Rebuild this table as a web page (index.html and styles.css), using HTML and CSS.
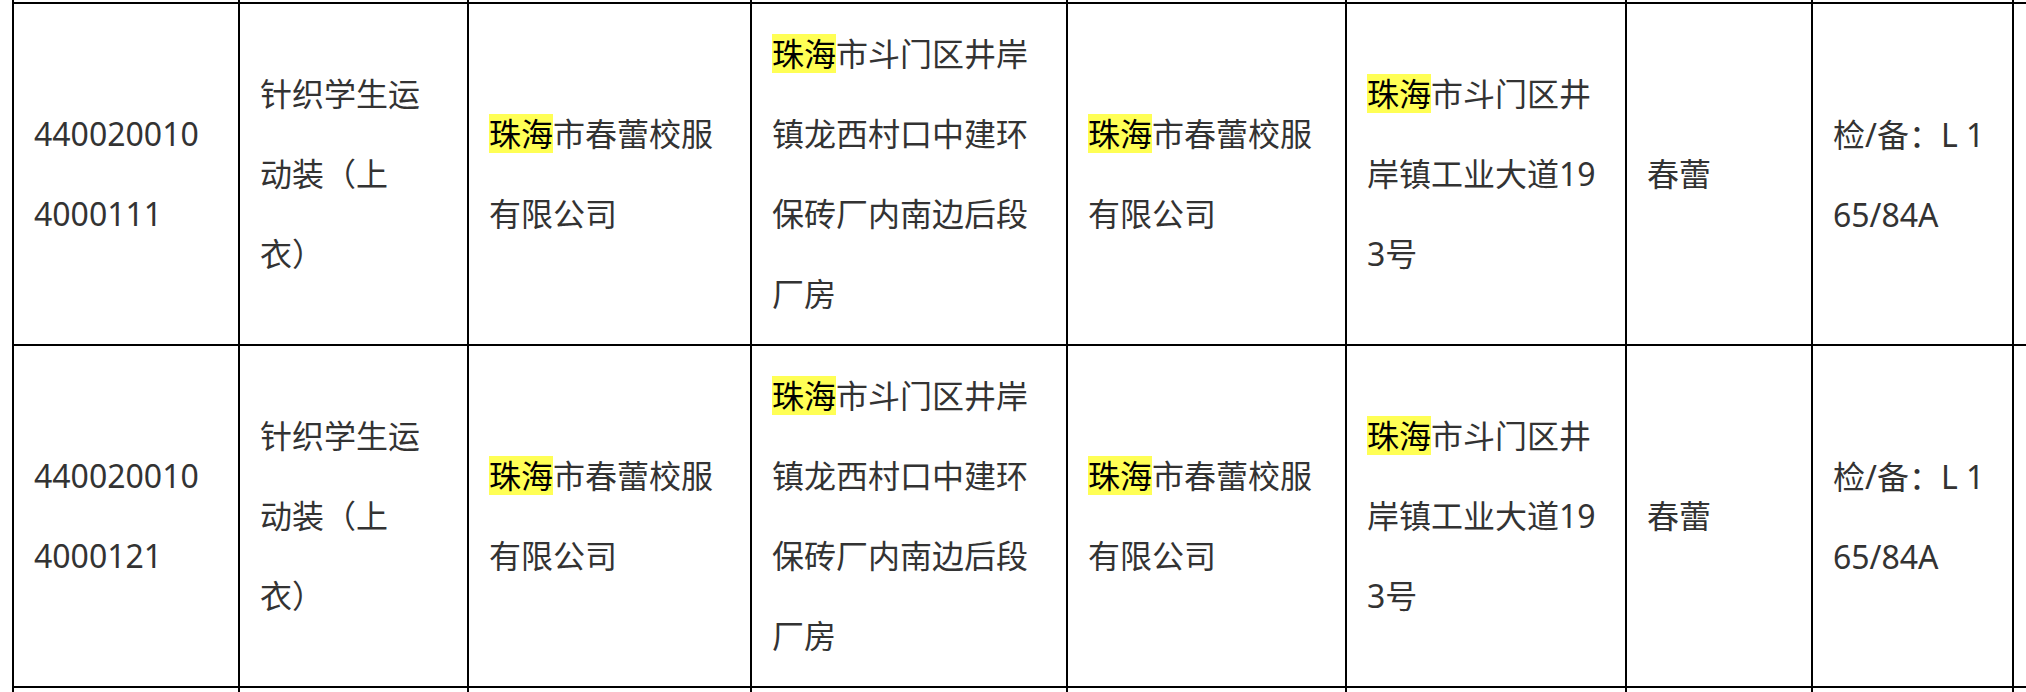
FILE: index.html
```html
<!DOCTYPE html>
<html lang="zh-CN">
<head>
<meta charset="utf-8">
<title>产品信息表</title>
<link rel="stylesheet" href="styles.css">
</head>
<body>
<div class="viewport">
  <table class="grid">
    <colgroup>
      <col class="c1"><col class="c2"><col class="c3"><col class="c4"><col class="c5"><col class="c6"><col class="c7"><col class="c8"><col class="c9">
    </colgroup>
    <tbody>
      <tr class="stub">
        <td></td><td></td><td></td><td></td><td></td><td></td><td></td><td></td><td></td>
      </tr>
      <tr>
        <td>4400200104000111</td>
        <td>针织学生运动装（上衣）</td>
        <td><span class="hl">珠海</span>市春蕾校服有限公司</td>
        <td><span class="hl">珠海</span>市斗门区井岸镇龙西村口中建环保砖厂内南边后段厂房</td>
        <td><span class="hl">珠海</span>市春蕾校服有限公司</td>
        <td><span class="hl">珠海</span>市斗门区井岸镇工业大道193号</td>
        <td>春蕾</td>
        <td>检/备<span class="punct">：</span>L 165/84A</td>
        <td></td>
      </tr>
      <tr>
        <td>4400200104000121</td>
        <td>针织学生运动装（上衣）</td>
        <td><span class="hl">珠海</span>市春蕾校服有限公司</td>
        <td><span class="hl">珠海</span>市斗门区井岸镇龙西村口中建环保砖厂内南边后段厂房</td>
        <td><span class="hl">珠海</span>市春蕾校服有限公司</td>
        <td><span class="hl">珠海</span>市斗门区井岸镇工业大道193号</td>
        <td>春蕾</td>
        <td>检/备<span class="punct">：</span>L 165/84A</td>
        <td></td>
      </tr>
      <tr class="next">
        <td></td><td></td><td></td><td></td><td></td><td></td><td></td><td></td><td></td>
      </tr>
    </tbody>
  </table>
</div>
</body>
</html>
```

FILE: styles.css
```css
html, body {
  margin: 0;
  padding: 0;
  background: #ffffff;
}

.viewport {
  width: 2026px;
  height: 692px;
  overflow: hidden;
}

.grid {
  margin-left: 12px;
  border-collapse: separate;
  border-spacing: 0;
  table-layout: fixed;
  width: 2200px;
  font-family: "Noto Sans", "Noto Sans CJK SC", sans-serif;
  font-size: 32px;
  line-height: 80px;
  color: #333333;
  text-spacing-trim: space-all;
}

.c1 { width: 226px; }
.c2 { width: 229px; }
.c3 { width: 283px; }
.c4 { width: 316px; }
.c5 { width: 279px; }
.c6 { width: 280px; }
.c7 { width: 186px; }
.c8 { width: 201px; }
.c9 { width: 200px; }

.grid td {
  box-sizing: border-box;
  border-left: 2px solid #000000;
  border-top: 2px solid #000000;
  padding: 10px 24px 10px 20px;
  vertical-align: middle;
  text-align: left;
  word-break: break-all;
}

.grid .stub td {
  border-top: 0;
  padding: 0;
  height: 2px;
  line-height: 0;
}

.grid .next td {
  height: 340px;
}

.hl {
  display: inline-block;
  line-height: 39px;
  background: #ffff55;
  color: #000000;
}

.punct {
  font-family: "Noto Sans CJK JP", sans-serif;
}
```
